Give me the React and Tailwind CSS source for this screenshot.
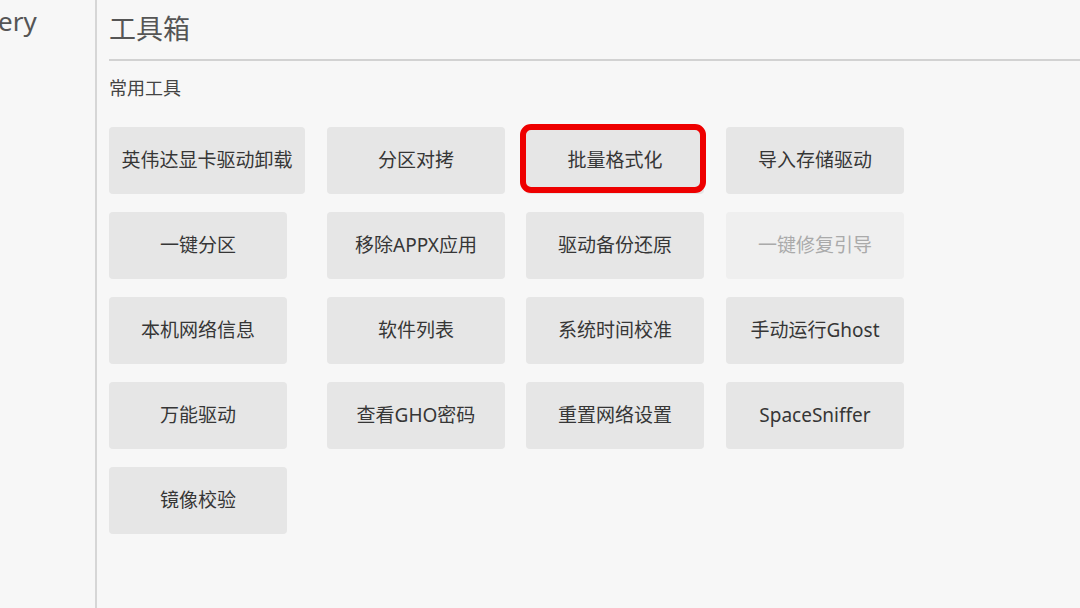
import React from "react";

const tools = [
  { label: "英伟达显卡驱动卸载", wide: true },
  { label: "分区对拷" },
  { label: "批量格式化", marked: true },
  { label: "导入存储驱动" },
  { label: "一键分区" },
  { label: "移除APPX应用" },
  { label: "驱动备份还原" },
  { label: "一键修复引导", disabled: true },
  { label: "本机网络信息" },
  { label: "软件列表" },
  { label: "系统时间校准" },
  { label: "手动运行Ghost" },
  { label: "万能驱动" },
  { label: "查看GHO密码" },
  { label: "重置网络设置" },
  { label: "SpaceSniffer" },
  { label: "镜像校验" },
];

function ToolButton({ label, wide, marked, disabled }) {
  return (
    <div className="relative">
      <button
        className={`h-[67px] rounded-[4px] text-[19px] flex items-center justify-center ${
          wide ? "w-[196px]" : "w-[178px]"
        } ${disabled ? "bg-[#efefef] text-[#aaaaaa]" : "bg-[#e6e6e6] text-[#363636]"}`}
      >
        {label}
      </button>
      {marked && (
        <div className="absolute left-[-6px] top-[-3px] w-[186px] h-[69px] border-[6px] border-[#ee0000] rounded-[11px] pointer-events-none"></div>
      )}
    </div>
  );
}

export default function App() {
  return (
    <div
      className="w-[1080px] h-[608px] bg-[#f7f7f7] flex overflow-hidden"
      style={{ fontFamily: '"Noto Sans", "Noto Sans CJK SC", sans-serif' }}
    >
      {/* sidebar */}
      <div className="w-[97px] shrink-0 border-r-2 border-[#d6d6d6] relative">
        <div className="absolute left-[-2px] top-[2px] text-[26px] text-[#555]">ery</div>
      </div>

      {/* content */}
      <div className="flex-1 pl-[12px]">
        <h1 className="text-[27px] text-[#555] leading-none pt-[15px] pb-[17px] border-b-2 border-[#d2d2d2]">
          工具箱
        </h1>
        <div className="text-[18px] text-[#444] leading-none mt-[18px]">常用工具</div>

        <div className="grid grid-cols-[218px_199px_200px_178px] gap-y-[18px] mt-[30px]">
          {tools.map((t) => (
            <ToolButton key={t.label} {...t} />
          ))}
        </div>
      </div>
    </div>
  );
}
